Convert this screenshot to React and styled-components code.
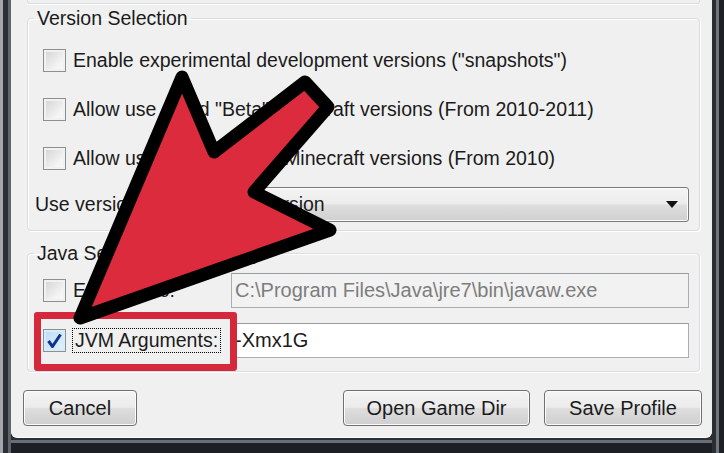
import React from 'react';
import styled, { createGlobalStyle } from 'styled-components';

const GlobalStyle = createGlobalStyle`
  html, body { margin: 0; padding: 0; background: #22262b; }
  body {
    width: 724px;
    height: 453px;
    overflow: hidden;
    font-family: "Liberation Sans", Arial, sans-serif;
    color: #1b1b1b;
  }
`;

const Frame = styled.div`
  position: relative;
  width: 724px;
  height: 453px;
  box-sizing: border-box;
  display: flex;
  padding: 0 12px 16px 11px;
  background:
    linear-gradient(to right, #a3a6aa 0 3px, #2a2e34 3px 8px, #60656c 8px 11px) left top / 11px 100% no-repeat,
    linear-gradient(to right, #2b2f36 0 4px, #72777e 4px 7px, #1d2025 7px) right top / 12px 100% no-repeat,
    linear-gradient(to bottom, #2b2f36 0 3px, #6a6f76 3px 6px, #1c1f24 6px) left bottom / 100% 16px no-repeat;
`;

const Dialog = styled.div`
  flex: 1;
  display: flex;
  flex-direction: column;
  background: #f0f0f0;
  border-radius: 0 0 6px 6px;
  box-shadow: 0 1px 0 #fdfdfd;
`;

const TopEdge = styled.div`
  height: 4px;
  margin: 0 12px 0 16px;
  box-sizing: border-box;
  border: 1px solid #d5dfe5;
  border-top: none;
  border-radius: 0 0 3px 3px;
  box-shadow: 0 1px 0 #fff;
`;

const Group = styled.fieldset`
  margin: ${p => p.$top}px 12px 0 16px;
  padding: ${p => p.$pt}px 10px ${p => p.$pb}px 15px;
  border: 1px solid #d5dfe5;
  border-radius: 4px;
  box-shadow: inset 1px 1px 0 #fff, 1px 1px 0 #fff;
  min-width: 0;
`;

const Legend = styled.legend`
  font-size: 19.5px;
  line-height: 22px;
  padding: 0 3px;
  margin-left: -9px;
`;

const OptionList = styled.div`
  display: flex;
  flex-direction: column;
  gap: 25px;
`;

const CheckRow = styled.label`
  display: flex;
  align-items: center;
  gap: ${p => p.$gap || 7}px;
  height: 24px;
  font-size: 19.5px;
  white-space: nowrap;
`;

const Box = styled.span`
  width: 23px;
  height: 23px;
  flex: none;
  box-sizing: border-box;
  border: 1px solid #8e8f8f;
  background: ${p => p.$checked
    ? 'linear-gradient(135deg, #b9dcf6 0%, #e3f2fd 100%)'
    : 'linear-gradient(135deg, #d2d2d2 0%, #f4f4f4 70%, #fafafa 100%)'};
  box-shadow: inset 0 0 0 2px ${p => p.$checked ? '#d6ecfb' : '#f1f1f1'};
  display: flex;
  align-items: center;
  justify-content: center;
`;

const Focus = styled.span`
  border: 1px dotted #000;
  padding: 0 2px;
  line-height: 23px;
`;

const ComboRow = styled.div`
  display: grid;
  grid-template-columns: 120px 1fr;
  align-items: center;
  margin: 17px 0 0 -8px;
  font-size: 19.5px;
`;

const Combo = styled.div`
  height: 35px;
  box-sizing: border-box;
  border: 1px solid #7a7a7a;
  border-radius: 3px;
  background: linear-gradient(to bottom, #f4f4f4 0%, #ececec 48%, #dedede 52%, #d0d0d0 100%);
  box-shadow: inset 0 0 0 1px #fbfbfb;
  display: flex;
  align-items: center;
  justify-content: space-between;
  padding: 0 10px 0 5px;
`;

const Caret = styled.span`
  width: 0;
  height: 0;
  border-left: 6px solid transparent;
  border-right: 6px solid transparent;
  border-top: 7px solid #111;
`;

const JavaGrid = styled.div`
  display: grid;
  grid-template-columns: 188px 1fr;
  grid-auto-rows: 35px;
  row-gap: 15px;
  align-items: center;
`;

const Field = styled.div`
  height: 35px;
  box-sizing: border-box;
  border: 1px solid #abadb3;
  border-top-color: #9a9ca3;
  background: ${p => p.$disabled ? '#f2f2f2' : '#fff'};
  color: ${p => p.$disabled ? '#7d7d7d' : '#1b1b1b'};
  font-size: 20px;
  display: flex;
  align-items: center;
  padding-left: 3px;
  white-space: nowrap;
  overflow: hidden;
`;

const ButtonRow = styled.div`
  display: flex;
  gap: 14px;
  margin: 18px 10px 0 12px;
`;

const Button = styled.button`
  width: ${p => p.$w}px;
  height: 36px;
  margin-left: ${p => p.$push ? 'auto' : '0'};
  border: 1px solid #707070;
  border-radius: 4px;
  background: linear-gradient(to bottom, #f4f4f4 0%, #ebebeb 48%, #dddddd 52%, #cfcfcf 100%);
  box-shadow: inset 0 0 0 1px #fcfcfc;
  font-family: inherit;
  font-size: 20px;
  color: #1b1b1b;
  padding: 0;
`;

const Highlight = styled.div`
  position: absolute;
  left: 34px;
  top: 312px;
  width: 203px;
  height: 59px;
  box-sizing: border-box;
  border: 7px solid #d5283b;
  border-radius: 3px;
  pointer-events: none;
`;

const Overlay = styled.svg`
  position: absolute;
  left: 0;
  top: 0;
  pointer-events: none;
`;

const Check = () => (
  <svg width="17" height="17" viewBox="0 0 17 17">
    <path d="M2.5 9 L6.5 14.5 L14.5 2.5" fill="none" stroke="#10338a" strokeWidth="3" strokeLinejoin="round" />
  </svg>
);

export default function App() {
  return (
    <Frame>
      <GlobalStyle />
      <Dialog>
        <TopEdge />
        <Group $top={3} $pt={19} $pb={8}>
          <Legend>Version Selection</Legend>
          <OptionList>
            <CheckRow><Box />Enable experimental development versions ("snapshots")</CheckRow>
            <CheckRow><Box />Allow use of old "Beta" Minecraft versions (From 2010-2011)</CheckRow>
            <CheckRow><Box />Allow use of old "Alpha" Minecraft versions (From 2010)</CheckRow>
          </OptionList>
          <ComboRow>
            <span>Use version:</span>
            <Combo>
              <span>Use Latest Version</span>
              <Caret />
            </Combo>
          </ComboRow>
        </Group>
        <Group $top={11} $pt={9} $pb={13}>
          <Legend>Java Settings (Advanced)</Legend>
          <JavaGrid>
            <CheckRow><Box />Executable:</CheckRow>
            <Field $disabled>C:\Program Files\Java\jre7\bin\javaw.exe</Field>
            <CheckRow $gap={6}><Box $checked><Check /></Box><Focus>JVM Arguments:</Focus></CheckRow>
            <Field>-Xmx1G</Field>
          </JavaGrid>
        </Group>
        <ButtonRow>
          <Button $w={114}>Cancel</Button>
          <Button $w={187} $push>Open Game Dir</Button>
          <Button $w={158}>Save Profile</Button>
        </ButtonRow>
      </Dialog>
      <Highlight />
      <Overlay width="724" height="453" viewBox="0 0 724 453">
        <polygon
          points="80,318 182,77 214,152 305,82 328,107 254,192 330,230"
          fill="#dd2b3e"
          stroke="#000"
          strokeWidth="13"
          strokeLinejoin="round"
        />
      </Overlay>
    </Frame>
  );
}
